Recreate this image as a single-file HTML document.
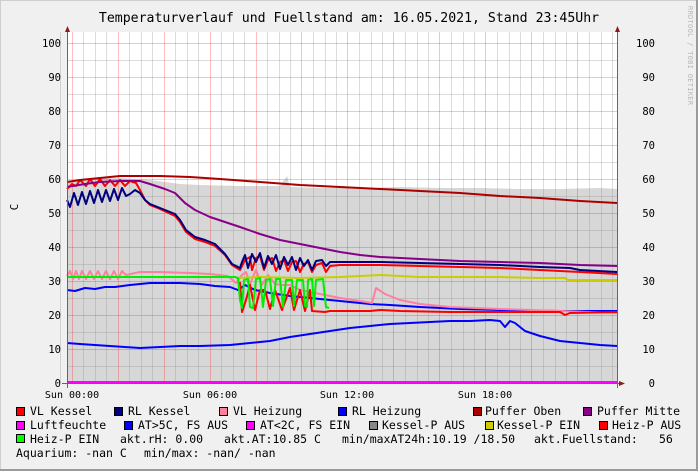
<!DOCTYPE html>
<html><head><meta charset="utf-8"><style>
html,body{margin:0;padding:0;width:698px;height:471px;overflow:hidden;background:#f0f0f0}
svg{display:block}
text{font-family:"DejaVu Sans Mono","Liberation Mono",monospace;fill:#000}
</style></head><body>
<svg width="698" height="471" xmlns="http://www.w3.org/2000/svg">
<rect x="0" y="0" width="698" height="471" fill="#f0f0f0"/>
<rect x="0" y="0" width="697" height="1" fill="#cfcfcf"/>
<rect x="0" y="0" width="1" height="470" fill="#cfcfcf"/>
<rect x="696" y="0" width="2" height="471" fill="#9a9a9a"/>
<rect x="0" y="469" width="698" height="2" fill="#9a9a9a"/>

<text x="349" y="22" font-size="13.2" text-anchor="middle">Temperaturverlauf und Fuellstand am: 16.05.2021, Stand 23:45Uhr</text>
<text transform="translate(688,6) rotate(90)" font-size="7" style="fill:#b8b8b8" letter-spacing="0.3">RRDTOOL / TOBI OETIKER</text>
<text transform="translate(18,207) rotate(-90)" font-size="11" text-anchor="middle">C</text>

<!-- plot bg -->
<rect x="67" y="32" width="550" height="351" fill="#ffffff"/>
<!-- gray area -->
<polygon fill="#d7d7d7" points="67,383 67,182 90,179 120,178 150,180 180,184 200,185 240,186 280,186 287,176 290,187 320,188 360,188 400,187 440,188 480,188 520,189 560,189 600,188 617,189 617,383"/>
<!-- grid -->
<g stroke="#8c8c8c" stroke-opacity="0.3" stroke-width="1">
<path d="M60.5 32V383M83.5 32V383M95.5 32V383M106.5 32V383M129.5 32V383M141.5 32V383M152.5 32V383M175.5 32V383M187.5 32V383M198.5 32V383M221.5 32V383M233.5 32V383M244.5 32V383M267.5 32V383M279.5 32V383M290.5 32V383M313.5 32V383M325.5 32V383M336.5 32V383M359.5 32V383M371.5 32V383M382.5 32V383M405.5 32V383M417.5 32V383M428.5 32V383M451.5 32V383M463.5 32V383M474.5 32V383M497.5 32V383M509.5 32V383M520.5 32V383M543.5 32V383M555.5 32V383M566.5 32V383M589.5 32V383M601.5 32V383M612.5 32V383"/>
<path d="M67 366.5H617M67 332.5H617M67 298.5H617M67 264.5H617M67 230.5H617M67 196.5H617M67 162.5H617M67 128.5H617M67 94.5H617M67 60.5H617"/>
</g>
<g stroke="#ff0000" stroke-opacity="0.25" stroke-width="1">
<path d="M72.5 32V383M118.5 32V383M164.5 32V383M210.5 32V383M256.5 32V383M301.5 32V383M347.5 32V383M393.5 32V383M439.5 32V383M485.5 32V383M531.5 32V383M577.5 32V383"/>
<path d="M67 349.5H617M67 315.5H617M67 281.5H617M67 247.5H617M67 213.5H617M67 179.5H617M67 145.5H617M67 111.5H617M67 77.5H617M67 43.5H617"/>
</g>

<g fill="none" stroke-width="2" stroke-linejoin="round">
<!-- AT blue -->
<polyline stroke="#0000ff" points="67,343 80,344 95,345 110,346 125,347 140,348 160,347 180,346 200,346 230,345 250,343 270,341 290,337 310,334 330,331 350,328 370,326 390,324 410,323 430,322 450,321 470,321 490,320 500,321 505,327 510,321 515,323 525,331 540,336 560,341 580,343 600,345 617,346"/>
<!-- RL Heizung blue -->
<polyline stroke="#0000ff" points="67,290 75,291 85,288 95,289 105,287 115,287 130,285 150,283 180,283 200,284 215,286 230,287 238,290 245,285 255,290 270,293 290,296 310,298 330,300 350,302 370,304 390,305 420,307 460,309 500,310 560,311 617,311"/>
<!-- Pink VL Heizung -->
<polyline stroke="#ff7fa0" points="67,276 70,271 73,279 76,271 79,279 82,271 86,279 90,271 94,279 98,271 102,279 106,271 110,279 114,271 118,279 122,271 126,275 140,272 160,272 190,273 210,274 228,276 236,283 242,275 246,272 250,284 256,270 262,285 268,275 275,284 282,285 290,285 300,290 320,294 340,298 360,301 372,303 376,288 385,294 400,300 420,304 450,307 500,309 560,311 617,313"/>
<!-- Yellow -->
<polyline stroke="#cccc00" points="236,278 260,277 300,278 340,277 380,275 420,277 460,277 500,277 540,278 565,278 568,280 617,280"/>
<!-- Red bottom VL -->
<polyline stroke="#ff0000" points="240,282 242,312 246,300 250,285 255,310 260,290 265,290 270,309 275,290 282,310 290,288 294,310 300,290 305,311 310,290 312,311 325,312 330,311 370,311 380,310 400,311 450,312 560,312 565,315 570,313 617,312"/>
<!-- Green -->
<polyline stroke="#00ee00" points="67,277 120,277 180,277 235,277 238,278 240,300 242,308 244,280 248,279 250,307 253,308 256,279 260,278 263,307 266,280 270,279 273,306 276,279 280,279 283,307 286,280 292,280 294,306 297,280 303,280 305,306 307,307 308,280 312,279 314,306 316,280 323,279 326,307 329,308"/>
<!-- VL Kessel red upper -->
<polyline stroke="#ff0000" points="67,189 72,184 76,186 80,180 86,186 90,179 95,186 100,179 105,186 110,180 115,186 120,180 125,186 130,181 136,183 140,190 145,200 150,205 160,209 175,216 180,222 186,232 195,239 205,242 215,246 225,255 232,265 240,270 245,260 250,257 252,270 256,258 260,256 264,270 268,260 272,258 276,271 280,262 284,260 288,271 292,262 296,261 300,272 304,264 308,262 312,272 316,265 322,263 326,272 330,266 340,265 380,265 420,266 460,267 500,268 540,270 580,272 617,274"/>
<!-- RL Kessel navy -->
<polyline stroke="#000080" points="67,200 70,207 74,193 78,205 82,192 86,204 90,191 94,203 98,190 102,202 106,190 110,201 114,189 118,200 122,188 126,196 130,194 135,190 140,193 145,200 150,204 160,208 175,214 180,220 186,230 195,237 205,240 215,244 225,254 232,264 240,268 242,262 245,255 248,268 252,254 256,262 260,253 264,268 268,256 272,264 276,255 280,269 284,257 288,265 292,257 296,270 300,258 304,266 308,260 312,270 316,261 322,260 326,266 330,262 340,262 380,262 420,263 460,264 500,265 540,267 570,268 580,270 617,272"/>
<!-- Puffer Mitte purple -->
<polyline stroke="#880088" points="67,187 85,184 100,182 120,181 140,181 150,184 165,189 175,193 185,203 195,210 210,217 225,222 240,227 260,234 280,240 300,244 320,248 340,252 360,255 380,257 420,259 460,261 500,262 540,263 580,265 617,266"/>
<!-- Puffer Oben dark red -->
<polyline stroke="#aa0000" points="67,182 80,180 100,178 120,176 140,176 160,176 190,177 220,179 260,182 300,185 340,187 380,189 420,191 460,193 500,196 540,198 580,201 617,203"/>
</g>
<!-- Luftfeuchte -->
<rect x="67" y="381" width="550" height="3" fill="#ff00ff"/>
<!-- axes -->
<g stroke="#666" stroke-width="1">
<line x1="67.5" y1="30" x2="67.5" y2="388"/>
<line x1="617.5" y1="30" x2="617.5" y2="388"/>
<line x1="62" y1="383.5" x2="620" y2="383.5"/>
</g>
<polygon points="67.5,26 65,32 70,32" fill="#8b1a1a"/>
<polygon points="617.5,26 615,32 620,32" fill="#8b1a1a"/>
<polygon points="625,383.5 619,381 619,386" fill="#8b1a1a"/>

<g font-size="10.5" text-anchor="end">
<text x="61" y="47">100</text><text x="61" y="81">90</text><text x="61" y="115">80</text><text x="61" y="149">70</text><text x="61" y="183">60</text><text x="61" y="217">50</text><text x="61" y="251">40</text><text x="61" y="285">30</text><text x="61" y="319">20</text><text x="61" y="353">10</text><text x="61" y="387">0</text>
<text x="655" y="47">100</text><text x="655" y="81">90</text><text x="655" y="115">80</text><text x="655" y="149">70</text><text x="655" y="183">60</text><text x="655" y="217">50</text><text x="655" y="251">40</text><text x="655" y="285">30</text><text x="655" y="319">20</text><text x="655" y="353">10</text><text x="655" y="387">0</text>
</g>
<g font-size="10" text-anchor="middle">
<text x="72" y="398">Sun 00:00</text><text x="210" y="398">Sun 06:00</text><text x="347" y="398">Sun 12:00</text><text x="485" y="398">Sun 18:00</text>
</g>

<!-- legend -->
<g stroke="#000" stroke-width="1">
<rect x="16.5" y="407.5" width="8" height="8" fill="#ff0000"/>
<rect x="114.5" y="407.5" width="8" height="8" fill="#000080"/>
<rect x="219.5" y="407.5" width="8" height="8" fill="#ff7fa0"/>
<rect x="338.5" y="407.5" width="8" height="8" fill="#0000ff"/>
<rect x="473.5" y="407.5" width="8" height="8" fill="#aa0000"/>
<rect x="583.5" y="407.5" width="8" height="8" fill="#880088"/>
<rect x="16.5" y="421.5" width="8" height="8" fill="#ff00ff"/>
<rect x="124.5" y="421.5" width="8" height="8" fill="#0000ff"/>
<rect x="246.5" y="421.5" width="8" height="8" fill="#ff00ff"/>
<rect x="369.5" y="421.5" width="8" height="8" fill="#888888"/>
<rect x="485.5" y="421.5" width="8" height="8" fill="#cccc00"/>
<rect x="599.5" y="421.5" width="8" height="8" fill="#ff0000"/>
<rect x="16.5" y="434.5" width="8" height="8" fill="#00ff00"/>
</g>
<g font-size="11.5">
<text x="30" y="415">VL Kessel</text>
<text x="128" y="415">RL Kessel</text>
<text x="233" y="415">VL Heizung</text>
<text x="352" y="415">RL Heizung</text>
<text x="485" y="415">Puffer Oben</text>
<text x="597" y="415">Puffer Mitte</text>
<text x="30" y="429">Luftfeuchte</text>
<text x="138" y="429">AT&gt;5C, FS AUS</text>
<text x="260" y="429">AT&lt;2C, FS EIN</text>
<text x="382" y="429">Kessel-P AUS</text>
<text x="497" y="429">Kessel-P EIN</text>
<text x="612" y="429">Heiz-P AUS</text>
<text x="30" y="443">Heiz-P EIN</text>
<text x="120" y="443">akt.rH: 0.00</text>
<text x="224" y="443">akt.AT:10.85 C</text>
<text x="342" y="443">min/maxAT24h:10.19 /18.50</text>
<text x="534" y="443">akt.Fuellstand:</text>
<text x="659" y="443">56</text>
<text x="16" y="457">Aquarium: -nan C</text>
<text x="144" y="457">min/max: -nan/ -nan</text>
</g>
</svg>
</body></html>
